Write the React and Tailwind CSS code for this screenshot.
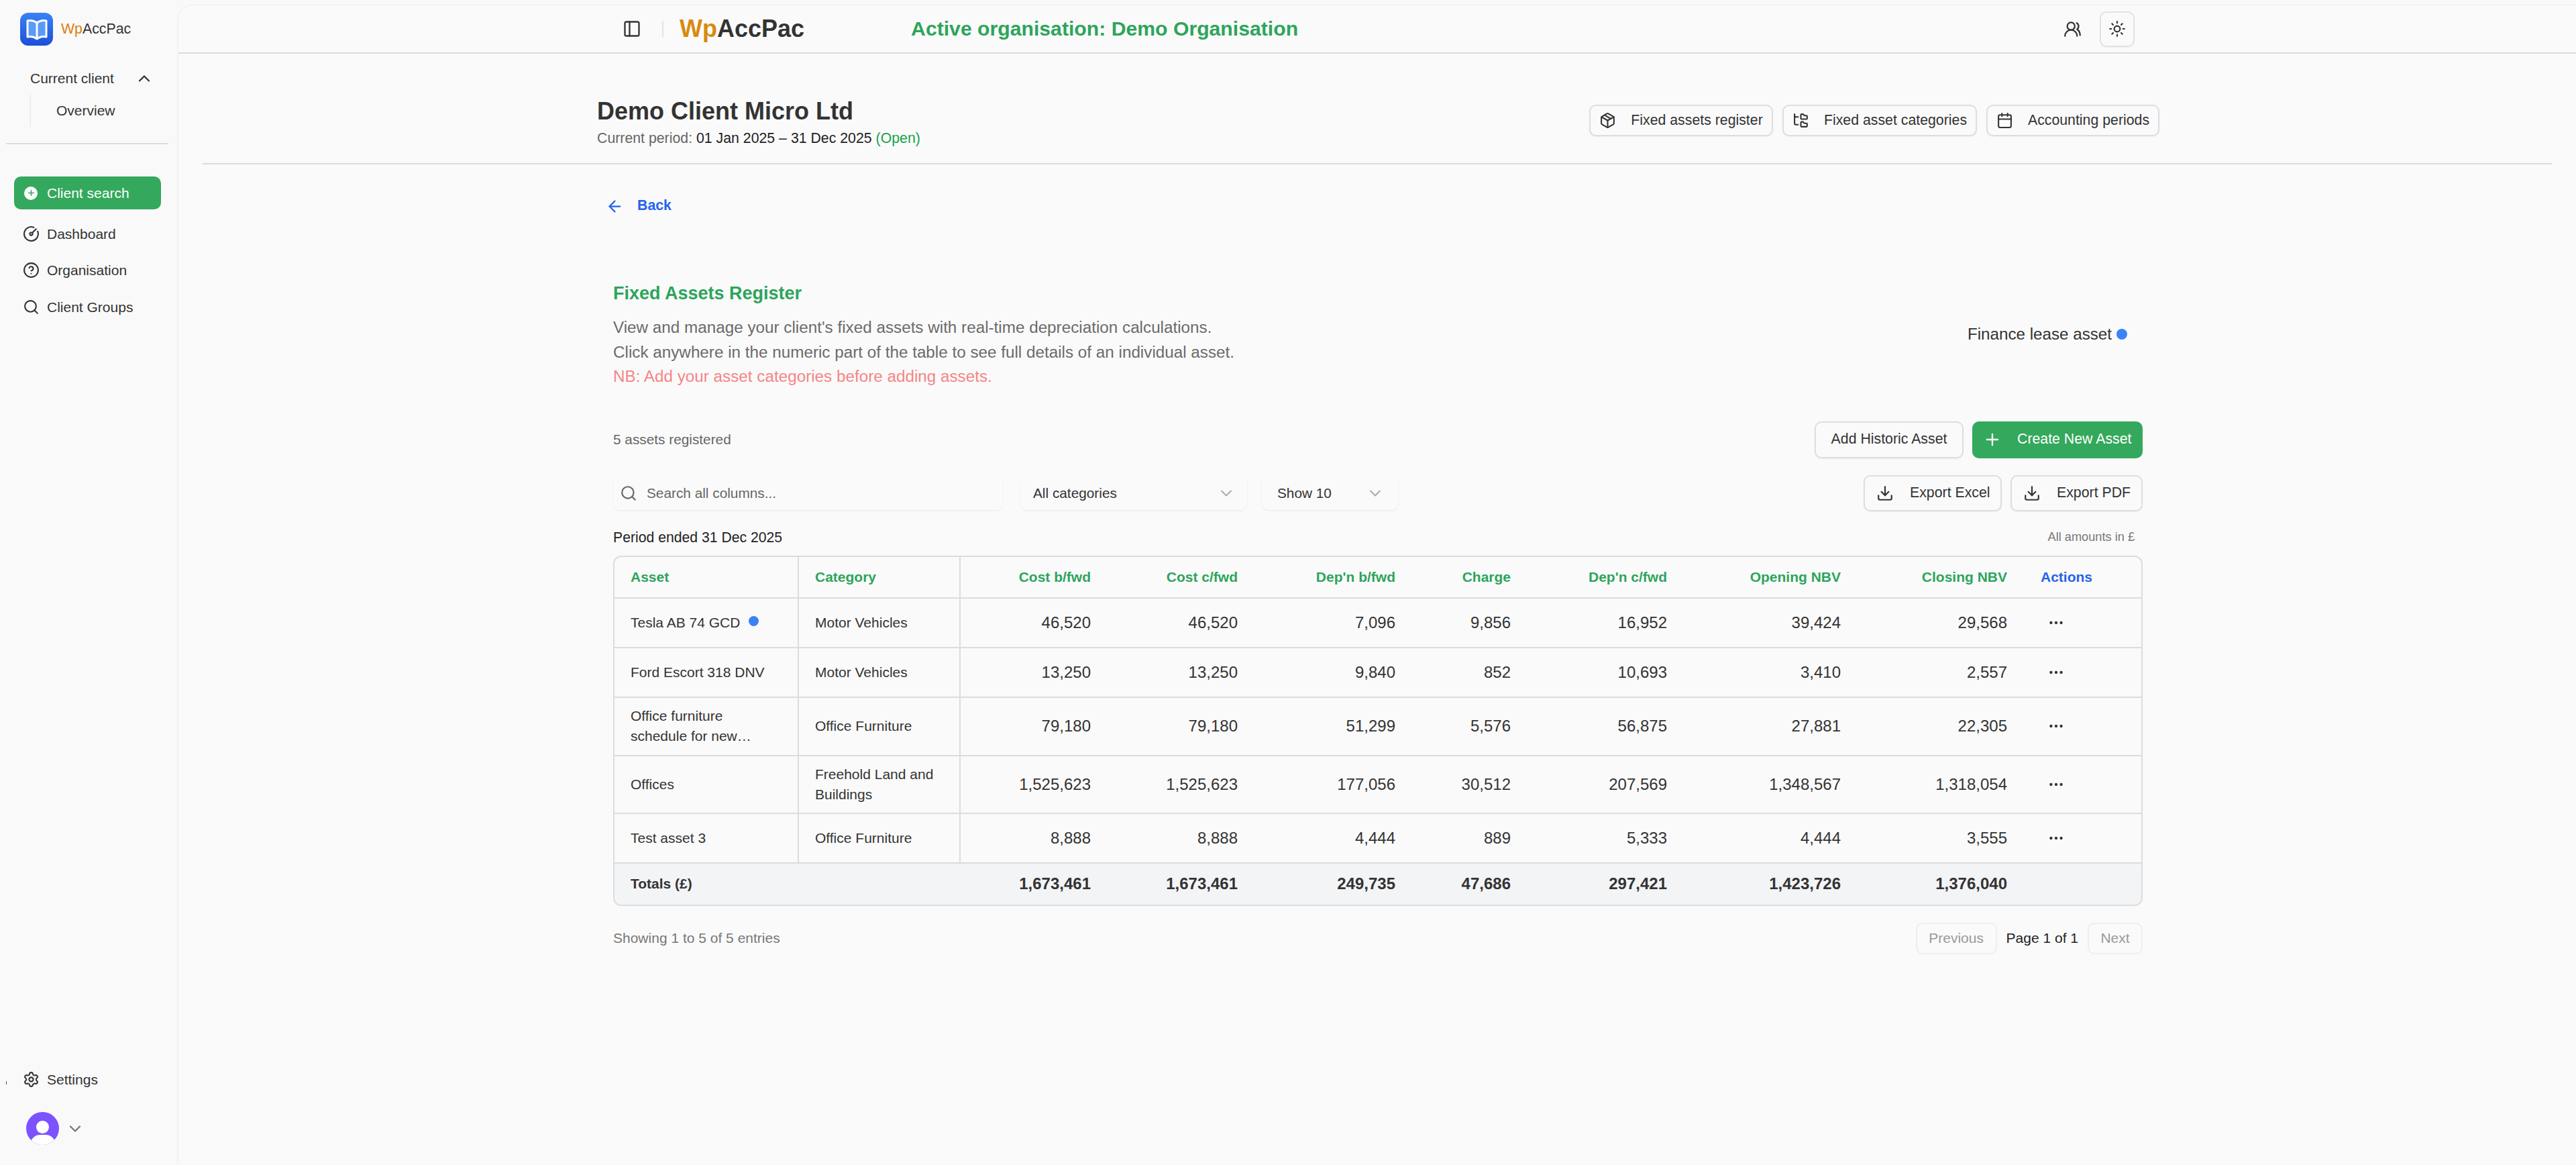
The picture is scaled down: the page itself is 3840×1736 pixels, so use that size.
import React from "react";
import {
  ArrowLeft, Calendar, ChevronDown, ChevronUp, CircleGauge, CircleHelp, Download, Ellipsis,
  FolderTree, Package, PanelLeft, Plus, Search, Settings, Sun, UsersRound,
} from "lucide-react";

const rows = [
  ["Tesla AB 74 GCD", "Motor Vehicles", "46,520", "46,520", "7,096", "9,856", "16,952", "39,424", "29,568", "h-[74px]", true],
  ["Ford Escort 318 DNV", "Motor Vehicles", "13,250", "13,250", "9,840", "852", "10,693", "3,410", "2,557", "h-[74px]"],
  [["Office furniture", "schedule for new…"], "Office Furniture", "79,180", "79,180", "51,299", "5,576", "56,875", "27,881", "22,305", "h-[87px]"],
  ["Offices", ["Freehold Land and", "Buildings"], "1,525,623", "1,525,623", "177,056", "30,512", "207,569", "1,348,567", "1,318,054", "h-[86px]"],
  ["Test asset 3", "Office Furniture", "8,888", "8,888", "4,444", "889", "5,333", "4,444", "3,555", "h-[74px]"],
];
const totals = ["1,673,461", "1,673,461", "249,735", "47,686", "297,421", "1,423,726", "1,376,040"];
const heads = ["Cost b/fwd", "Cost c/fwd", "Dep'n b/fwd", "Charge", "Dep'n c/fwd", "Opening NBV", "Closing NBV"];

function Logo() {
  return (
    <div className="w-[49px] h-[49px] rounded-[12px] bg-gradient-to-b from-[#3b82f6] to-[#1d4ed8] flex items-center justify-center">
      <svg width="34" height="36" viewBox="0 0 34 36" fill="none">
        <path d="M3 5 C8 4 13 5 17 8 C21 5 26 4 31 5 V29 C26 28 21 29 17 32 C13 29 8 28 3 29 Z" fill="#5b9bf8" stroke="#fff" strokeWidth="3" strokeLinejoin="round" />
        <path d="M17 8 V32" stroke="#fff" strokeWidth="3" />
      </svg>
    </div>
  );
}

function NavItem({ icon: Icon, label, cls = "" }) {
  return (
    <div className={`flex items-center h-[49px] pl-[13px] gap-[11px] text-[#333] ${cls}`}>
      <Icon size={25} strokeWidth={2} className="shrink-0" />
      <span>{label}</span>
    </div>
  );
}

function OutlineBtn({ icon: Icon, label, cls = "" }) {
  return (
    <button className={`flex items-center justify-center gap-[22px] h-[47px] rounded-[10px] border-2 border-[#dedede] bg-[#fafafa] text-[21.3px] text-[#333] shadow-[0_1px_2px_rgba(0,0,0,0.06)] ${cls}`}>
      <Icon size={25} strokeWidth={2} className="shrink-0" />
      <span>{label}</span>
    </button>
  );
}

function Th({ children, cls = "" }) {
  return <th className={`font-bold text-[21px] text-[#2ca55b] ${cls}`}>{children}</th>;
}

function TwoLine({ v }) {
  if (Array.isArray(v)) return <div className="leading-[30px]">{v[0]}<br />{v[1]}</div>;
  return <span>{v}</span>;
}

export default function App() {
  return (
    <div className="flex w-[3840px] h-[1736px] bg-[#f9f9f9] overflow-hidden text-[#333]" style={{ fontFamily: '"Liberation Sans", Arial, sans-serif' }}>
      <aside className="w-[264px] shrink-0 h-full flex flex-col text-[21px]">
        <div className="flex items-center pl-[30px] pt-[19px] gap-[12px]">
          <Logo />
          <span className="text-[21.3px]"><span className="text-[#d97f0e]">Wp</span>AccPac</span>
        </div>
        <div className="flex items-center pl-[45px] pr-[35px] mt-[25px] h-[48px] justify-between">
          <span>Current client</span>
          <ChevronUp size={28} strokeWidth={2} />
        </div>
        <div className="ml-[44px] h-[48px] border-l-2 border-[#eeeeee] pl-[38px] flex items-center">Overview</div>
        <div className="ml-[9px] mr-[13px] mt-[24px] border-t-2 border-[#dcdcdc]" />
        <div className="pl-[21px] pr-[24px] mt-[48px] flex flex-col">
          <div className="flex items-center h-[49px] rounded-[10px] bg-[#34a85c] text-white pl-[15px] gap-[14px]">
            <span className="w-[20px] h-[20px] rounded-full bg-white flex items-center justify-center shrink-0">
              <Plus size={13} strokeWidth={3} className="text-[#34a85c]" />
            </span>
            <span>Client search</span>
          </div>
          <NavItem icon={CircleGauge} label="Dashboard" cls="mt-[12px]" />
          <NavItem icon={CircleHelp} label="Organisation" cls="mt-[5px]" />
          <NavItem icon={Search} label="Client Groups" cls="mt-[6px]" />
        </div>
        <div className="mt-auto px-[21px] pb-[30px] flex flex-col">
          <div className="relative">
            <span className="absolute left-[-12px] top-[27px] w-[1px] h-[5px] bg-[#555]" />
            <NavItem icon={Settings} label="Settings" />
          </div>
          <div className="flex items-center pl-[18px] mt-[24px] gap-[10px]">
            <div className="w-[49px] h-[49px] rounded-full bg-[#7c52ff] overflow-hidden flex flex-col items-center">
              <span className="w-[19px] h-[19px] rounded-full bg-white mt-[13px] shrink-0" />
              <span className="w-[38px] h-[30px] rounded-full bg-white mt-[2px] shrink-0" />
            </div>
            <ChevronDown size={28} strokeWidth={2} className="text-[#777]" />
          </div>
        </div>
      </aside>

      <main className="flex-1 min-w-0 mt-[6px] flex flex-col bg-[#fafafa] rounded-tl-[24px] border-l-2 border-t-2 border-[#f3f3f3]">
        <header className="h-[72px] shrink-0 border-b-2 border-[#dcdcdc] flex items-center pl-[662px] pr-[658px]">
          <PanelLeft size={28} strokeWidth={2} className="shrink-0" />
          <span className="ml-[31px] w-[2px] h-[24px] bg-[#e3e3e3]" />
          <span className="ml-[24px] text-[36px] font-bold leading-none"><span className="text-[#d98a12]">Wp</span>AccPac</span>
          <span className="ml-[159px] text-[30.2px] font-bold text-[#2ca55b]">Active organisation: Demo Organisation</span>
          <UsersRound size={27} strokeWidth={2} className="ml-auto shrink-0" />
          <button className="ml-[27px] w-[52px] h-[53px] shrink-0 rounded-[10px] border-2 border-[#e2e2e2] flex items-center justify-center shadow-[0_1px_2px_rgba(0,0,0,0.05)]">
            <Sun size={26} strokeWidth={2} />
          </button>
        </header>

        <section className="mx-[36px] h-[165px] shrink-0 border-b-2 border-[#dcdcdc] pl-[588px] pr-[585px] flex items-center justify-between">
          <div className="pt-[40px]">
            <h1 className="text-[36px] font-bold leading-[46px] text-[#333]">Demo Client Micro Ltd</h1>
            <p className="text-[21.3px] leading-[30px] mt-[2px] text-[#666]">Current period: <span className="text-[#222]">01 Jan 2025 – 31 Dec 2025</span> <span className="text-[#16a34a]">(Open)</span></p>
          </div>
          <div className="flex gap-[14px] mt-[36px]">
            <OutlineBtn icon={Package} label="Fixed assets register" cls="w-[274px]" />
            <OutlineBtn icon={FolderTree} label="Fixed asset categories" cls="w-[290px]" />
            <OutlineBtn icon={Calendar} label="Accounting periods" cls="w-[258px]" />
          </div>
        </section>

        <div className="pl-[648px] pr-[646px] flex flex-col">
          <div className="flex items-center mt-[49px] h-[26px] gap-[20px] text-[#2563eb] font-bold text-[21.3px]">
            <ArrowLeft size={27} strokeWidth={2} className="ml-[-11px]" />
            <span>Back</span>
          </div>

          <div className="flex justify-between mt-[98px]">
            <div>
              <h2 className="text-[27px] font-bold leading-[38px] text-[#2ca55b]">Fixed Assets Register</h2>
              <div className="mt-[14px] text-[24.25px] leading-[36.5px] text-[#6b6b6b]">
                <p>View and manage your client's fixed assets with real-time depreciation calculations.</p>
                <p>Click anywhere in the numeric part of the table to see full details of an individual asset.</p>
                <p className="text-[#f58585]">NB: Add your asset categories before adding assets.</p>
              </div>
            </div>
            <div className="flex items-center gap-[7px] h-[32px] mt-[64px] mr-[23px] text-[24.2px] text-[#333]">
              <span>Finance lease asset</span>
              <span className="w-[16px] h-[16px] rounded-full bg-[#3b82f6]" />
            </div>
          </div>

          <div className="flex items-center justify-between mt-[48px] h-[55px]">
            <span className="text-[20.8px] text-[#666]">5 assets registered</span>
            <div className="flex gap-[13px]">
              <button className="w-[222px] h-[55px] rounded-[10px] border-2 border-[#dedede] text-[21.3px] text-[#333] shadow-[0_1px_2px_rgba(0,0,0,0.06)]">Add Historic Asset</button>
              <button className="w-[254px] h-[55px] rounded-[10px] bg-[#34a85c] text-white text-[21.3px] flex items-center pl-[16px] gap-[23px]">
                <Plus size={28} strokeWidth={2} />
                <span>Create New Asset</span>
              </button>
            </div>
          </div>

          <div className="flex items-center mt-[25px] h-[54px] text-[20.8px]">
            <div className="w-[581px] h-[51px] rounded-[10px] shadow-[0_1px_3px_rgba(0,0,0,0.07)] flex items-center pl-[10px] gap-[14px] text-[#666]">
              <Search size={26} strokeWidth={2} />
              <span>Search all columns...</span>
            </div>
            <div className="ml-[26px] w-[338px] h-[51px] rounded-[10px] shadow-[0_1px_3px_rgba(0,0,0,0.07)] flex items-center justify-between pl-[19px] pr-[17px] text-[#333]">
              <span>All categories</span>
              <ChevronDown size={28} strokeWidth={1.75} className="text-[#aaa]" />
            </div>
            <div className="ml-[22px] w-[203px] h-[51px] rounded-[10px] shadow-[0_1px_3px_rgba(0,0,0,0.07)] flex items-center justify-between pl-[23px] pr-[20px] text-[#333]">
              <span>Show 10</span>
              <ChevronDown size={28} strokeWidth={1.75} className="text-[#aaa]" />
            </div>
            <div className="ml-auto flex gap-[13px]">
              <button className="w-[206px] h-[54px] rounded-[10px] border-2 border-[#dedede] flex items-center pl-[17px] gap-[24px] text-[21.3px] text-[#333] shadow-[0_1px_2px_rgba(0,0,0,0.06)]">
                <Download size={26} strokeWidth={2} /><span>Export Excel</span>
              </button>
              <button className="w-[197px] h-[54px] rounded-[10px] border-2 border-[#dedede] flex items-center pl-[17px] gap-[24px] text-[21.3px] text-[#333] shadow-[0_1px_2px_rgba(0,0,0,0.06)]">
                <Download size={26} strokeWidth={2} /><span>Export PDF</span>
              </button>
            </div>
          </div>

          <div className="flex items-center justify-between mt-[26px] h-[26px]">
            <span className="text-[21.2px] text-[#222]">Period ended 31 Dec 2025</span>
            <span className="text-[18.2px] text-[#777] mr-[12px]">All amounts in £</span>
          </div>

          <div className="mt-[14px] w-full rounded-[12px] border-2 border-[#dcdcdc] overflow-hidden">
            <table className="w-full table-fixed border-collapse text-[21px] text-[#333]">
              <colgroup>
                <col className="w-[274px]" />
                <col className="w-[241px]" />
                <col className="w-[213px]" />
                <col className="w-[219px]" />
                <col className="w-[235px]" />
                <col className="w-[172px]" />
                <col className="w-[233px]" />
                <col className="w-[259px]" />
                <col className="w-[248px]" />
                <col />
              </colgroup>
              <thead>
                <tr className="h-[61px] border-b-2 border-[#dcdcdc]">
                  <Th cls="text-left pl-[24px] border-r-2 border-[#dcdcdc]">Asset</Th>
                  <Th cls="text-left pl-[24px] border-r-2 border-[#dcdcdc]">Category</Th>
                  {heads.map((h) => <Th key={h} cls="text-right pr-[18px]">{h}</Th>)}
                  <th className="font-bold text-left pl-[32px] text-[#2563eb]">Actions</th>
                </tr>
              </thead>
              <tbody>
                {rows.map((r, i) => (
                  <tr key={i} className={`${r[9]} border-b-2 border-[#dcdcdc]`}>
                    <td className="pl-[24px] pr-[8px] border-r-2 border-[#dcdcdc]">
                      <TwoLine v={r[0]} />
                      {r[10] && <span className="inline-block ml-[13px] w-[15px] h-[15px] rounded-full bg-[#3b82f6] relative top-[-2px]" />}
                    </td>
                    <td className="pl-[24px] pr-[8px] border-r-2 border-[#dcdcdc]"><TwoLine v={r[1]} /></td>
                    {r.slice(2, 9).map((n, j) => <td key={j} className="text-right pr-[18px] text-[24px]">{n}</td>)}
                    <td className="pl-[42px]"><Ellipsis size={26} strokeWidth={2} /></td>
                  </tr>
                ))}
                <tr className="h-[62px] bg-[#f3f4f6] font-bold">
                  <td className="pl-[24px]" colSpan={2}>Totals (£)</td>
                  {totals.map((n, j) => <td key={j} className="text-right pr-[18px] text-[24px]">{n}</td>)}
                  <td />
                </tr>
              </tbody>
            </table>
          </div>

          <div className="flex items-center justify-between mt-[25px] h-[47px] w-full">
            <span className="text-[21px] text-[#777]">Showing 1 to 5 of 5 entries</span>
            <div className="flex items-center text-[21px]">
              <button className="w-[121px] h-[47px] rounded-[10px] border-2 border-[#eeeeee] text-[#999]">Previous</button>
              <span className="mx-[14px] text-[#222]">Page 1 of 1</span>
              <button className="w-[82px] h-[47px] rounded-[10px] border-2 border-[#eeeeee] text-[#999]">Next</button>
            </div>
          </div>
        </div>
      </main>
    </div>
  );
}
